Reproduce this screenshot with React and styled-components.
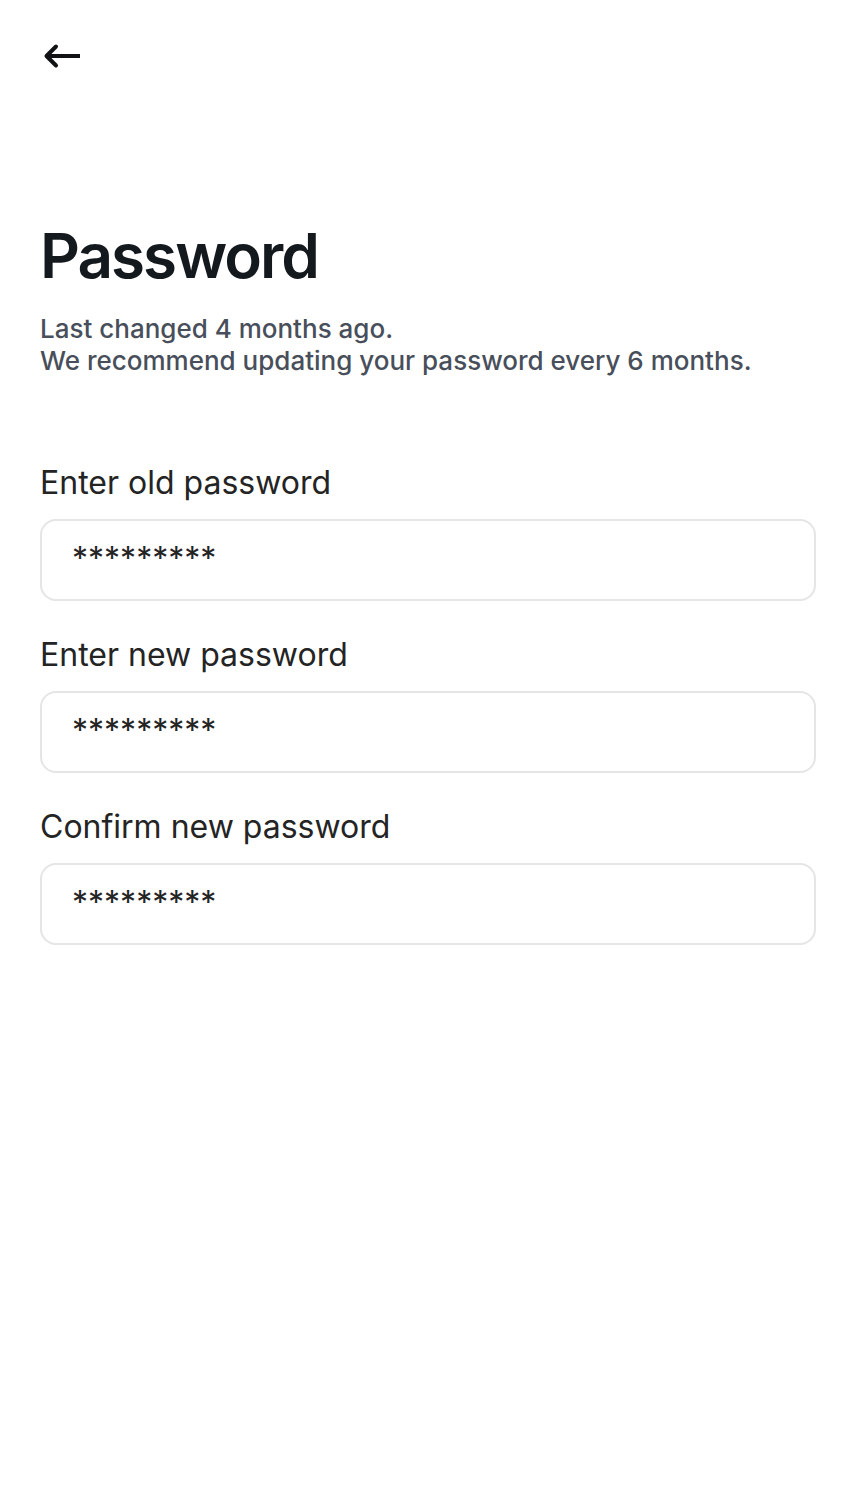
import React from "react";
import styled, { createGlobalStyle } from "styled-components";

const GlobalStyle = createGlobalStyle`
  *, *::before, *::after { box-sizing: border-box; }
  body {
    margin: 0;
    background: #ffffff;
    font-family: Inter, "Liberation Sans", sans-serif;
  }
`;

const Page = styled.main`
  min-height: 100vh;
  padding: 32px 40px;
  background: #ffffff;
`;

const BackButton = styled.button`
  display: flex;
  align-items: center;
  justify-content: center;
  width: 48px;
  height: 48px;
  margin-left: -2px;
  padding: 0;
  border: 0;
  background: transparent;
  color: #111214;
  cursor: pointer;
`;

const Header = styled.header`
  margin-top: 136px;
`;

const Title = styled.h1`
  margin: 0;
  color: #14191e;
  font-size: 62px;
  line-height: 80px;
  font-weight: 600;
  letter-spacing: -2px;
`;

const Hint = styled.p`
  margin: 17px 0 0;
  color: #484f5b;
  font-size: 26px;
  line-height: 32px;
  font-weight: 500;
`;

const Form = styled.form`
  display: flex;
  flex-direction: column;
  gap: 32px;
  margin-top: 84px;
`;

const Field = styled.div`
  display: flex;
  flex-direction: column;
  gap: 14px;
`;

const Label = styled.label`
  color: #242424;
  font-size: 32px;
  line-height: 44px;
`;

const Input = styled.input`
  width: 100%;
  height: 82px;
  padding: 0 30px 4px;
  border: 2px solid #e5e5e5;
  border-radius: 16px;
  background: #ffffff;
  color: #242424;
  font: 400 32px/40px Inter, "Liberation Sans", sans-serif;
`;

const fields = [
  { id: "old-password", label: "Enter old password" },
  { id: "new-password", label: "Enter new password" },
  { id: "confirm-password", label: "Confirm new password" },
];

export default function App() {
  return (
    <>
      <GlobalStyle />
      <Page>
        <BackButton type="button" aria-label="Back">
          <svg width="48" height="48" viewBox="0 0 48 48" fill="none" stroke="currentColor" strokeWidth="4" strokeLinejoin="round">
            <path d="M42 24H9" />
            <path d="M18 14.5L8.5 24L18 33.5" strokeLinecap="round" />
          </svg>
        </BackButton>
        <Header>
          <Title>Password</Title>
          <Hint>
            Last changed 4 months ago.
            <br />
            We recommend updating your password every 6 months.
          </Hint>
        </Header>
        <Form>
          {fields.map(({ id, label }) => (
            <Field key={id}>
              <Label htmlFor={id}>{label}</Label>
              <Input id={id} type="text" autoComplete="off" defaultValue="*********" />
            </Field>
          ))}
        </Form>
      </Page>
    </>
  );
}
